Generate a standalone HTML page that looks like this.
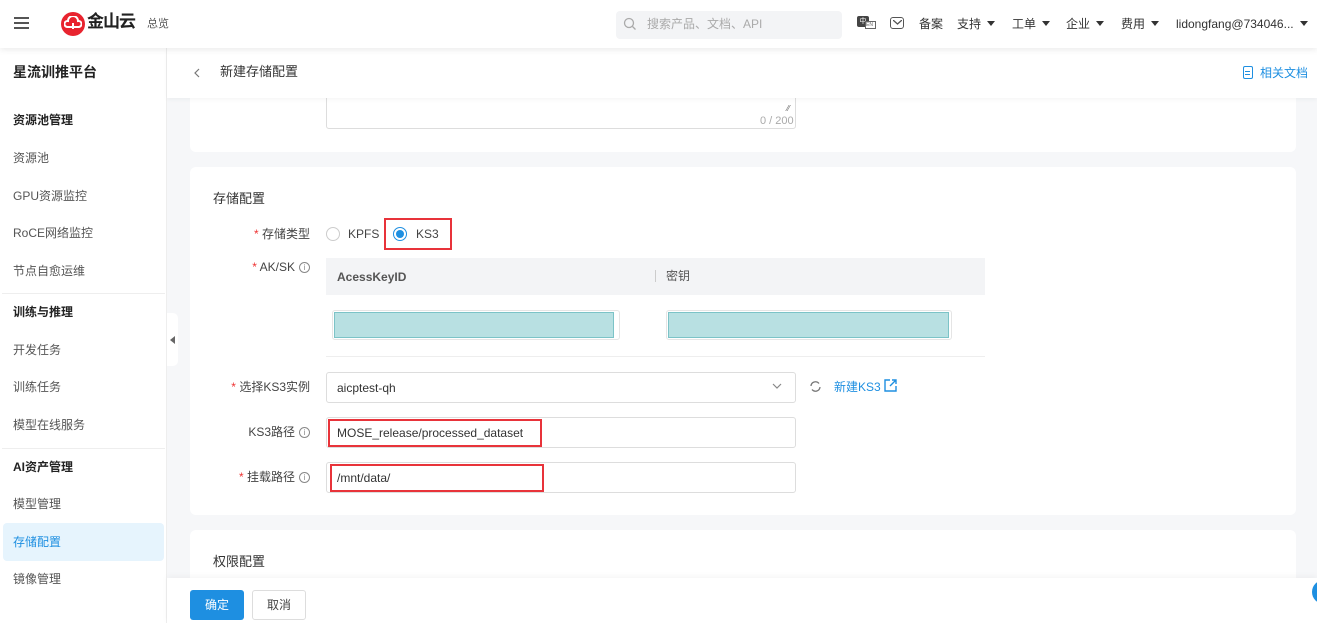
<!DOCTYPE html>
<html><head><meta charset="utf-8">
<style>
*{box-sizing:border-box;margin:0;padding:0}
body{width:1317px;height:623px;overflow:hidden;background:#f6f7f9;font-family:"Liberation Sans","Noto Sans CJK SC",sans-serif;color:#333;font-size:12px;position:relative;line-height:14px}
.abs{position:absolute}
.top{left:0;top:0;width:1317px;height:48px;background:#fff;box-shadow:0 2px 6px rgba(0,0,0,.08);z-index:5}
.side{left:0;top:48px;width:167px;height:575px;background:#fff;border-right:1px solid #eee}
.si{position:absolute;left:13px;font-size:12px;color:#555}
.sh{position:absolute;left:13px;font-size:12px;font-weight:bold;color:#222}
.card{background:#fff;border-radius:6px;position:absolute;left:190px;width:1106px}
.lbl{position:absolute;font-size:12px;color:#444;text-align:right;width:120px;left:190px}
.req{color:#e33}
.inp{position:absolute;border:1px solid #ddd;border-radius:3px;background:#fff;height:31px}
.red{position:absolute;border:2px solid #e8333a}
.info{display:inline-block;width:11px;height:11px;border:1px solid #888;border-radius:50%;font-size:8px;line-height:9px;text-align:center;color:#888;vertical-align:1px;margin-left:4px}
.nav{position:absolute;top:17px;font-size:12px;color:#333}
.tri{display:inline-block;border-left:4px solid transparent;border-right:4px solid transparent;border-top:5px solid #333;vertical-align:2px;margin-left:6px}
</style></head><body>
<div class="abs top">
  <div class="abs" style="left:14px;top:17px;width:15px;height:2px;background:#555;box-shadow:0 5px 0 #555,0 10px 0 #555"></div>
  <div class="abs" style="left:61px;top:12px;width:24px;height:24px;border-radius:50%;background:#e8242f"></div>
  <svg class="abs" style="left:64px;top:16px" width="18" height="16" viewBox="0 0 18 16"><path d="M3 11a3 3 0 0 1 1-6 5 5 0 0 1 10 0 3 3 0 0 1 1 6z" fill="none" stroke="#fff" stroke-width="2"/><path d="M9 7v6" stroke="#fff" stroke-width="2"/></svg>
  <div class="abs" style="left:87px;top:15px;font-size:17px;font-weight:bold;color:#222;letter-spacing:-1px">金山云</div>
  <div class="abs" style="left:147px;top:17px;font-size:11px;color:#555">总览</div>
  <div class="abs" style="left:616px;top:11px;width:226px;height:28px;background:#f3f4f6;border-radius:4px"></div>
  <svg class="abs" style="left:623px;top:17px" width="14" height="14"><circle cx="6" cy="6" r="4.5" fill="none" stroke="#aaa" stroke-width="1.3"/><path d="M9.5 9.5l3 3" stroke="#aaa" stroke-width="1.3"/></svg>
  <div class="abs" style="left:647px;top:17px;font-size:12px;color:#aaa">搜索产品、文档、API</div>
  <div class="abs" style="left:857px;top:16px;width:12px;height:11px;background:#444;border-radius:2px;color:#fff;font-size:7px;text-align:center;line-height:11px">中</div>
  <div class="abs" style="left:865px;top:21px;width:11px;height:8px;border:1px solid #666;font-size:5px;color:#666;line-height:6px;background:#fff">EN</div>
  <div class="abs" style="left:890px;top:17px;width:14px;height:12px;border:1.5px solid #555;border-radius:3px"></div>
  <svg class="abs" style="left:893px;top:20px" width="9" height="5"><path d="M0 0l4.5 4 4.5-4" fill="none" stroke="#555" stroke-width="1.3"/></svg>
  <div class="nav" style="left:919px">备案</div>
  <div class="nav" style="left:957px">支持<span class="tri"></span></div>
  <div class="nav" style="left:1012px">工单<span class="tri"></span></div>
  <div class="nav" style="left:1066px">企业<span class="tri"></span></div>
  <div class="nav" style="left:1121px">费用<span class="tri"></span></div>
  <div class="nav" style="left:1176px">lidongfang@734046...<span class="tri"></span></div>
</div>
<div class="abs" style="left:167px;top:48px;width:1150px;height:50px;background:#fff;z-index:3;box-shadow:0 2px 4px rgba(0,0,0,.04)">
  <svg class="abs" style="left:27px;top:20px" width="6" height="10"><path d="M5 1L1 5l4 4" fill="none" stroke="#777" stroke-width="1.2"/></svg>
  <div class="abs" style="left:53px;top:17px;font-size:13px;color:#333">新建存储配置</div>
  <div class="abs" style="left:1076px;top:18px;width:10px;height:13px;border:1.3px solid #1e8fe1;border-radius:2px"></div>
  <div class="abs" style="left:1078px;top:23px;width:5px;height:1px;background:#1e8fe1;box-shadow:0 3px 0 #1e8fe1"></div>
  <div class="abs" style="left:1093px;top:18px;font-size:12px;color:#1e8fe1">相关文档</div>
</div>
<div class="abs side">
  <div class="sh" style="top:17px;font-size:14px">星流训推平台</div>
  <div class="sh" style="top:65px">资源池管理</div>
  <div class="si" style="top:103px">资源池</div>
  <div class="si" style="top:141px">GPU资源监控</div>
  <div class="si" style="top:178px">RoCE网络监控</div>
  <div class="si" style="top:216px">节点自愈运维</div>
  <div class="abs" style="left:2px;top:245px;width:163px;height:1px;background:#eee"></div>
  <div class="sh" style="top:257px">训练与推理</div>
  <div class="si" style="top:295px">开发任务</div>
  <div class="si" style="top:332px">训练任务</div>
  <div class="si" style="top:370px">模型在线服务</div>
  <div class="abs" style="left:2px;top:400px;width:163px;height:1px;background:#eee"></div>
  <div class="sh" style="top:412px">AI资产管理</div>
  <div class="si" style="top:449px">模型管理</div>
  <div class="abs" style="left:3px;top:475px;width:161px;height:38px;background:#e6f4fd;border-radius:4px"></div>
  <div class="si" style="top:487px;color:#1e8fe1">存储配置</div>
  <div class="si" style="top:524px">镜像管理</div>
</div>
<div class="abs" style="left:167px;top:313px;width:11px;height:53px;background:#fff;border-radius:0 5px 5px 0"></div>
<div class="abs" style="left:170px;top:336px;border-top:4px solid transparent;border-bottom:4px solid transparent;border-right:5px solid #666"></div>

<div class="card" style="top:80px;height:72px"></div>
<div class="inp" style="left:326px;top:98px;width:470px;height:31px;border-top:none;border-radius:0 0 3px 3px"></div>
<div class="abs" style="left:760px;top:114px;font-size:11px;color:#aaa">0 / 200</div>
<div class="abs" style="left:787px;top:102px;font-size:8px;color:#666">⁄⁄</div>

<div class="card" style="top:167px;height:348px"></div>
<div class="abs" style="left:213px;top:192px;font-size:13px;color:#333">存储配置</div>
<div class="lbl" style="top:227px"><span class="req">* </span>存储类型</div>
<div class="abs" style="left:326px;top:227px;width:14px;height:14px;border:1px solid #ccc;border-radius:50%"></div>
<div class="abs" style="left:348px;top:227px;font-size:12px;color:#444">KPFS</div>
<div class="abs" style="left:393px;top:227px;width:14px;height:14px;border:1px solid #1e8fe1;border-radius:50%"></div>
<div class="abs" style="left:396px;top:230px;width:8px;height:8px;background:#1e8fe1;border-radius:50%"></div>
<div class="abs" style="left:416px;top:227px;font-size:12px;color:#444">KS3</div>
<div class="red" style="left:384px;top:218px;width:68px;height:32px"></div>
<div class="lbl" style="top:260px"><span class="req">* </span>AK/SK<span class="info">i</span></div>
<div class="abs" style="left:326px;top:258px;width:659px;height:37px;background:#f3f4f6"></div>
<div class="abs" style="left:337px;top:270px;font-size:12px;color:#555;font-weight:bold">AcessKeyID</div>
<div class="abs" style="left:655px;top:270px;width:1px;height:12px;background:#ccc"></div>
<div class="abs" style="left:666px;top:269px;font-size:12px;color:#555">密钥</div>
<div class="abs" style="left:332px;top:310px;width:288px;height:30px;border:1px solid #e5e5e5;border-radius:3px"></div>
<div class="abs" style="left:334px;top:312px;width:280px;height:26px;background:#b8e0e2;border:1px solid #7cc3c7"></div>
<div class="abs" style="left:666px;top:310px;width:286px;height:30px;border:1px solid #e5e5e5;border-radius:3px"></div>
<div class="abs" style="left:668px;top:312px;width:281px;height:26px;background:#b8e0e2;border:1px solid #7cc3c7"></div>
<div class="abs" style="left:326px;top:356px;width:659px;height:1px;background:#eee"></div>
<div class="lbl" style="top:380px"><span class="req">* </span>选择KS3实例</div>
<div class="inp" style="left:326px;top:372px;width:470px"></div>
<div class="abs" style="left:337px;top:381px;font-size:12px;color:#333">aicptest-qh</div>
<svg class="abs" style="left:772px;top:383px" width="10" height="6"><path d="M1 1l4 4 4-4" fill="none" stroke="#888" stroke-width="1.2"/></svg>
<svg class="abs" style="left:809px;top:380px" width="13" height="13"><path d="M2 6a4.5 4.5 0 0 1 8-2.5M11 7a4.5 4.5 0 0 1-8 2.5" fill="none" stroke="#777" stroke-width="1.3"/></svg>
<div class="abs" style="left:834px;top:380px;font-size:12px;color:#1e8fe1">新建KS3</div>
<svg class="abs" style="left:884px;top:379px" width="13" height="13"><path d="M6 1H1v11h11V7M8 1h4v4M12 1L6 7" fill="none" stroke="#1e8fe1" stroke-width="1.4"/></svg>
<div class="lbl" style="top:425px">KS3路径<span class="info">i</span></div>
<div class="inp" style="left:326px;top:417px;width:470px"></div>
<div class="abs" style="left:337px;top:426px;font-size:12px;color:#333">MOSE_release/processed_dataset</div>
<div class="red" style="left:328px;top:419px;width:214px;height:28px"></div>
<div class="lbl" style="top:470px"><span class="req">* </span>挂载路径<span class="info">i</span></div>
<div class="inp" style="left:326px;top:462px;width:470px"></div>
<div class="abs" style="left:337px;top:471px;font-size:12px;color:#333">/mnt/data/</div>
<div class="red" style="left:330px;top:464px;width:214px;height:28px"></div>

<div class="card" style="top:530px;height:60px"></div>
<div class="abs" style="left:213px;top:555px;font-size:13px;color:#333">权限配置</div>

<div class="abs" style="left:167px;top:578px;width:1150px;height:45px;background:#fff;box-shadow:0 -2px 6px rgba(0,0,0,.04)"></div>
<div class="abs" style="left:190px;top:590px;width:54px;height:30px;background:#1e8fe1;border-radius:3px;color:#fff;font-size:12px;text-align:center;line-height:30px">确定</div>
<div class="abs" style="left:252px;top:590px;width:54px;height:30px;border:1px solid #ddd;border-radius:3px;color:#444;font-size:12px;text-align:center;line-height:28px">取消</div>
<div class="abs" style="left:1312px;top:580px;width:24px;height:24px;border-radius:50%;background:#1e8fe1"></div>
</body></html>
